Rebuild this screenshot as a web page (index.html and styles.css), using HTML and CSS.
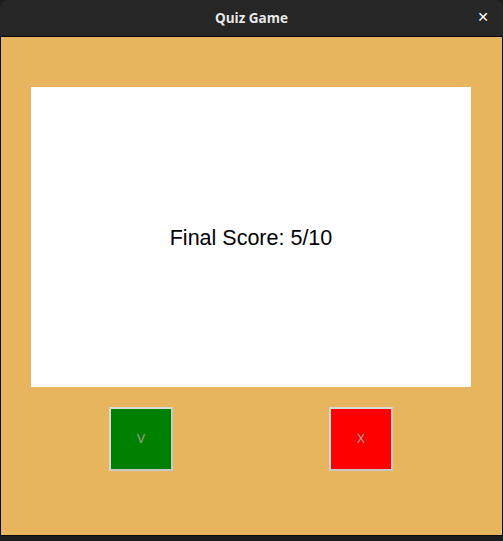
FILE: index.html
```html
<!DOCTYPE html>
<html>
<head>
<meta charset="utf-8">
<link rel="stylesheet" href="styles.css">
</head>
<body>
<div class="window">
  <div class="titlebar">
    <span class="title">Quiz Game</span>
    <span class="close">&#x2715;</span>
  </div>
  <div class="content">
    <div class="panel">Final Score: 5/10</div>
    <div class="buttons">
      <div class="cell"><div class="btn green">V</div></div>
      <div class="cell"><div class="btn red">X</div></div>
    </div>
  </div>
  <div class="bottom"></div>
</div>
</body>
</html>
```
FILE: styles.css
```css
html, body {
  margin: 0;
  padding: 0;
  background: #1c1d1f;
  width: 503px;
  height: 541px;
  overflow: hidden;
}
.window {
  width: 503px;
  height: 541px;
  display: flex;
  flex-direction: column;
}
.titlebar {
  height: 36px;
  background: #262626;
  border-radius: 8px 8px 0 0;
  border-bottom: 1px solid #0b0b0b;
  display: flex;
  align-items: center;
  justify-content: center;
  position: relative;
  flex: none;
}
.title {
  font-family: "Open Sans", "DejaVu Sans", sans-serif;
  font-weight: 700;
  font-size: 13.5px;
  color: #e8e8e8;
}
.close {
  position: absolute;
  right: 14px;
  top: 9px;
  font-family: "DejaVu Sans", sans-serif;
  font-weight: 700;
  font-size: 14px;
  color: #ffffff;
}
.content {
  height: 499px;
  flex: none;
  background: #e6b55e;
  border-left: 1px solid #0b0b0b;
  border-right: 1px solid #0b0b0b;
  border-bottom: 1px solid #0b0b0b;
  padding: 50px 30px 0 30px;
  box-sizing: border-box;
  display: flex;
  flex-direction: column;
  align-items: flex-start;
}
.panel {
  width: 440px;
  height: 300px;
  background: #ffffff;
  display: flex;
  align-items: center;
  justify-content: center;
  font-family: "Liberation Sans", Arial, sans-serif;
  font-size: 21.5px;
  color: #000;
  padding-top: 2px;
  box-sizing: border-box;
}
.buttons {
  margin-top: 20px;
  width: 440px;
  display: grid;
  grid-template-columns: 220px 220px;
}
.cell {
  display: flex;
  justify-content: center;
}
.btn {
  width: 60px;
  height: 60px;
  border: 2px solid #d9d9d9;
  border-right-color: #c8c8c8;
  border-bottom-color: #c8c8c8;
  display: flex;
  align-items: center;
  justify-content: center;
  font-family: "Liberation Sans", Arial, sans-serif;
  font-size: 12px;
  color: #a3a3a3;
}
.green { background: #008000; }
.red { background: #ff0000; }
.bottom {
  flex: 1;
  background: #1c1d1f;
}
```
